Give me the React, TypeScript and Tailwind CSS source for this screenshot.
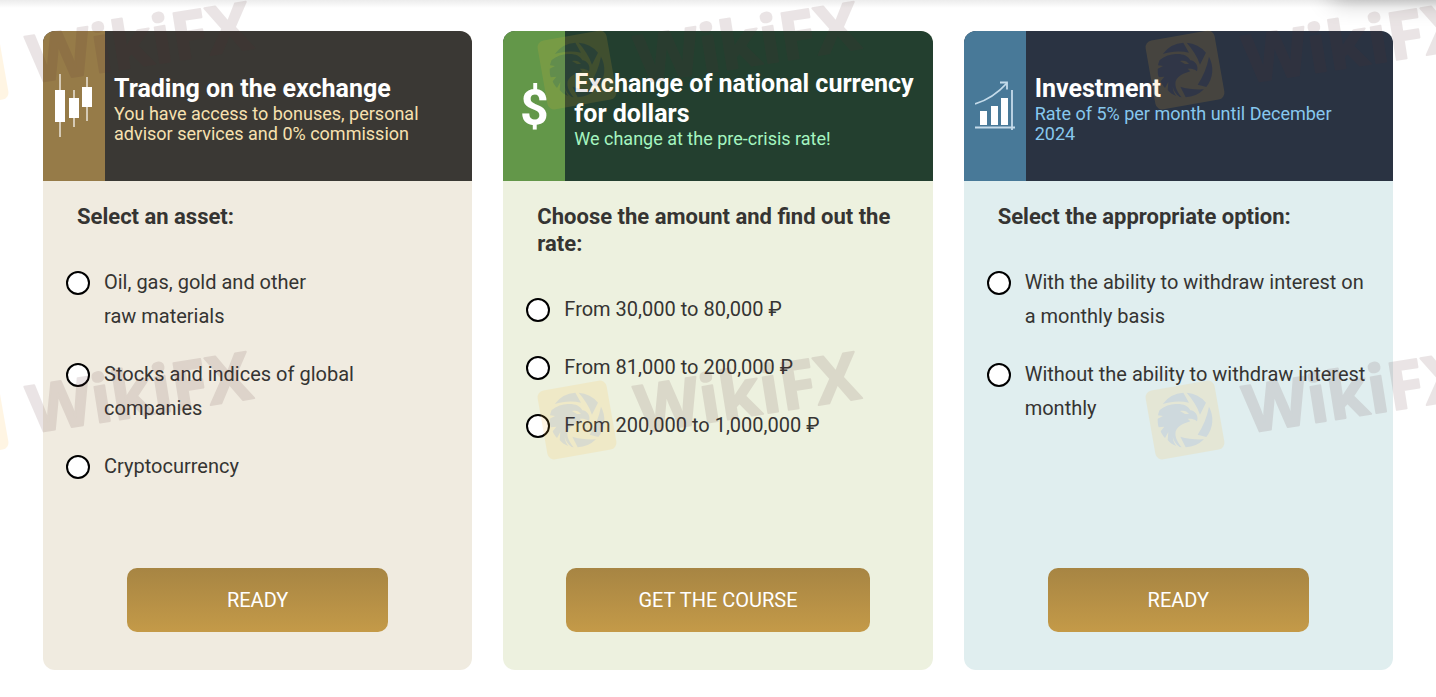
import React, { useState } from 'react';
import clsx from 'clsx';

type Offer = {
  id: string;
  title: string;
  subtitle: string;
  question: string;
  options: string[];
  action: string;
  icon: React.ReactNode;
  iconBg: string;
  headBg: string;
  bodyBg: string;
  subtitleColor: string;
  buttonPadding: string;
};

const CandlesIcon = () => (
  <svg width="38" height="64" viewBox="0 0 38 64" aria-hidden="true">
    <g fill="#fff" fillOpacity="0.6">
      <rect x="4" y="0" width="2" height="63" />
      <rect x="18" y="16" width="2" height="37" />
      <rect x="31" y="3" width="2" height="44" />
    </g>
    <g fill="#fff">
      <rect x="0" y="16" width="10" height="32" />
      <rect x="14" y="24" width="10" height="20" />
      <rect x="27" y="13" width="10" height="20" />
    </g>
  </svg>
);

const ChartIcon = () => (
  <svg width="40" height="50" viewBox="0 0 40 50" aria-hidden="true">
    <g fill="none" stroke="#c4dbea" strokeWidth="1.8">
      <path d="M0 23C13 19 23 12 32 2" />
      <path d="M25 1.5h7v7" />
      <path d="M37 9v40" />
      <path d="M0 46.5h40" strokeWidth="2.2" />
    </g>
    <g fill="#fff">
      <rect x="5" y="30" width="7" height="14" />
      <rect x="16" y="25" width="7" height="19" />
      <rect x="26" y="17" width="7" height="27" />
    </g>
  </svg>
);

const offers: Offer[] = [
  {
    id: 'trading',
    title: 'Trading on the exchange',
    subtitle: 'You have access to bonuses, personal advisor services and 0% commission',
    question: 'Select an asset:',
    options: ['Oil, gas, gold and other\nraw materials', 'Stocks and indices of global companies', 'Cryptocurrency'],
    action: 'READY',
    icon: <CandlesIcon />,
    iconBg: 'bg-[#967b48]',
    headBg: 'bg-[#3a3834]',
    bodyBg: 'bg-[#f0ebe0]',
    subtitleColor: 'text-[#f7e1b0]',
    buttonPadding: 'px-[100px]',
  },
  {
    id: 'exchange',
    title: 'Exchange of national currency for dollars',
    subtitle: 'We change at the pre-crisis rate!',
    question: 'Choose the amount and find out the rate:',
    options: ['From 30,000 to 80,000 ₽', 'From 81,000 to 200,000 ₽', 'From 200,000 to 1,000,000 ₽'],
    action: 'GET THE COURSE',
    icon: <span className="pt-1 text-[50px] leading-none font-bold text-white">$</span>,
    iconBg: 'bg-[#639749]',
    headBg: 'bg-[#233f2f]',
    bodyBg: 'bg-[#edf1df]',
    subtitleColor: 'text-[#a5f5c0]',
    buttonPadding: 'px-[72px]',
  },
  {
    id: 'investment',
    title: 'Investment',
    subtitle: 'Rate of 5% per month until December 2024',
    question: 'Select the appropriate option:',
    options: ['With the ability to withdraw interest on a monthly basis', 'Without the ability to withdraw interest monthly'],
    action: 'READY',
    icon: <ChartIcon />,
    iconBg: 'bg-[#487998]',
    headBg: 'bg-[#2a3342]',
    bodyBg: 'bg-[#e0eeef]',
    subtitleColor: 'text-[#87c8ee]',
    buttonPadding: 'px-[100px]',
  },
];

const OfferCard: React.FC<{ offer: Offer }> = ({ offer }) => {
  const [selected, setSelected] = useState<number | null>(null);

  return (
    <section className={clsx('flex min-h-[639px] flex-col overflow-hidden rounded-xl', offer.bodyBg)}>
      <header className={clsx('flex h-[150px]', offer.headBg)}>
        <div className={clsx('flex w-[62px] shrink-0 items-center justify-center', offer.iconBg)}>{offer.icon}</div>
        <div className="flex flex-col justify-center pt-[6px] pr-3 pl-[9px]">
          <h2 className="text-[25px] leading-[30px] font-bold text-white">{offer.title}</h2>
          <p className={clsx('max-w-[312px] text-lg leading-5', offer.subtitleColor)}>{offer.subtitle}</p>
        </div>
      </header>

      <form className="flex flex-1 flex-col pt-[22px] pb-[38px]" onSubmit={(e) => e.preventDefault()}>
        <fieldset>
          <legend className="pr-6 pl-[34px] text-[22px] leading-[27px] font-bold">{offer.question}</legend>
          <div className="mt-[35px] flex flex-col gap-6 pr-5 pl-[23px]">
            {offer.options.map((option, i) => (
              <label key={option} className="flex items-start gap-[14px] text-xl leading-[34px]">
                <input
                  type="radio"
                  name={offer.id}
                  checked={selected === i}
                  onChange={() => setSelected(i)}
                  className="mt-[6px] size-6 shrink-0 appearance-none rounded-full border-2 border-black bg-white checked:border-8"
                />
                <span className="whitespace-pre-line">{option}</span>
              </label>
            ))}
          </div>
        </fieldset>
        <button
          type="submit"
          className={clsx(
            'mt-auto h-16 self-center rounded-[10px] bg-linear-to-b from-[#a78543] to-[#c49a48] text-xl whitespace-nowrap text-white',
            offer.buttonPadding
          )}
        >
          {offer.action}
        </button>
      </form>
    </section>
  );
};

// One stamp: eagle badge plus wordmark, origin at the badge centre
const Stamp: React.FC<{ x: number; y: number }> = ({ x, y }) => (
  <g transform={`translate(${x} ${y})`}>
    <g opacity="0.13">
      <rect x="-35" y="-35" width="70" height="70" rx="7" fill="#ffb830" transform="rotate(-10)" />
      <g fill="#5d5068" transform="scale(0.333)">
        <path d="M-67-48A82 82 0 0 1-5-82L12-52C-12-58-40-57-67-48Z" />
        <path d="M5-82A82 82 0 0 1 63-52L45-16C36-42 22-62 5-82Z" />
        <path d="M72-40A82 82 0 0 1 64 51L38 44C54 20 66-8 72-40Z" />
        <path d="M57 58A82 82 0 0 1 2 82L-14 50C6 57 32 59 57 58Z" />
        <path d="M-76-30C-60-44-38-50-22-48C-4-48 10-42 16-29C30-28 42-12 36 4C28-4 16-4 8-4L16 4C0 10-20 14-28 34C-32 52-20 70-10 82L-16 81C-28 72-34 62-37 50C-36 64-30 72-26 78C-38 74-46 68-52 60L-50 36L-60 54C-66 48-70 42-73 34L-62 20L-79 22C-82 14-82 4-82-4L-66-12L-81-14C-80-20-78-26-76-30Z" />
      </g>
      <path d="M-5-9C-1-10 2-9 4-6L0-6Z" fill="#ffb830" />
    </g>
    <text
      x="60"
      y="23"
      transform="rotate(-9)"
      fill="#582d30"
      stroke="#582d30"
      strokeWidth="2"
      strokeLinejoin="round"
      opacity="0.12"
      fontSize="66"
      fontWeight="700"
      className="font-['Open_Sans',sans-serif]"
    >
      WikiFX
    </text>
  </g>
);

const Watermark = () => (
  <svg className="pointer-events-none absolute inset-0 h-full w-full" aria-hidden="true">
    {[70, 420].map((y) => [-31, 577, 1185].map((x) => <Stamp key={`${x}-${y}`} x={x} y={y} />))}
  </svg>
);

export default function App() {
  return (
    <main className="relative min-h-screen overflow-hidden bg-white px-[43px] pt-[31px] pb-[27px] font-[Roboto,sans-serif] text-[#353432]">
      {/* Shadows cast by the bar above the section */}
      <div className="absolute inset-x-0 top-0 h-2 bg-linear-to-b from-[#ececec] to-white" />
      <div className="absolute -top-6 -right-6 h-6 w-32 shadow-[0_0_24px_rgba(0,0,0,0.3)]" />

      <div className="grid grid-cols-3 gap-[31px]">
        {offers.map((offer) => (
          <OfferCard key={offer.id} offer={offer} />
        ))}
      </div>

      <Watermark />
    </main>
  );
}
